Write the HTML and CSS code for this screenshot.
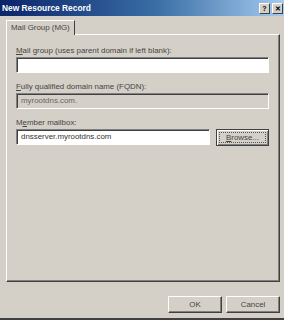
FILE: index.html
```html
<!DOCTYPE html>
<html lang="en">
<head>
    <meta charset="UTF-8">
    <title>New Resource Record</title>
    <link rel="stylesheet" href="styles.css">
</head>
<body>
    <div class="window">
        <div class="titlebar">
            <span class="title">New Resource Record</span>
            <div class="caption-buttons">
                <span class="cap-btn">?</span>
                <span class="cap-btn">&#x2715;</span>
            </div>
        </div>

        <div class="tabs">
            <div class="tab">Mail Group (MG)</div>
        </div>

        <div class="panel">
            <label class="field-label"><u>M</u>ail group (uses parent domain if left blank):</label>
            <div class="textbox"></div>

            <label class="field-label"><u>F</u>ully qualified domain name (FQDN):</label>
            <div class="textbox disabled">myrootdns.com.</div>

            <label class="field-label">M<u>e</u>mber mailbox:</label>
            <div class="row">
                <div class="textbox">dnsserver.myrootdns.com</div>
                <button class="btn browse"><u>B</u>rowse...</button>
            </div>
        </div>

        <div class="footer">
            <button class="btn">OK</button>
            <button class="btn">Cancel</button>
        </div>
    </div>
</body>
</html>
```

FILE: styles.css
```css
body {
    margin: 0;
    font-family: "Liberation Sans", Arial, sans-serif;
    font-size: 7.9px;
    color: #333;
}
.window {
    width: 284px;
    height: 320px;
    background-color: #d4d0c8;
    box-sizing: border-box;
    border-bottom: 2px solid #404040;
    display: flex;
    flex-direction: column;
}
.titlebar {
    height: 16px;
    background: linear-gradient(to right, #0a246a, #3a6ea5 55%, #a6caf0);
    display: flex;
    align-items: center;
    justify-content: space-between;
    padding: 0 1px 0 2px;
}
.title {
    color: white;
    font-weight: bold;
    font-size: 8.4px;
}
.caption-buttons {
    display: flex;
    gap: 2px;
}
.cap-btn {
    width: 9px;
    height: 9px;
    background-color: #d4d0c8;
    border: 1px solid;
    border-color: #fff #404040 #404040 #fff;
    font-size: 7px;
    font-weight: bold;
    line-height: 9px;
    text-align: center;
    color: #000;
}
.tabs {
    display: flex;
    padding: 4px 0 0 6px;
}
.tab {
    height: 14px;
    padding: 0 4px;
    border: 1px solid;
    border-color: #fff #404040 transparent #fff;
    border-bottom: none;
    line-height: 14px;
    color: #444;
    margin-bottom: -1px;
    position: relative;
    background-color: #d4d0c8;
}
.panel {
    margin: 0 4px 0 6px;
    height: 248px;
    box-sizing: border-box;
    border: 1px solid;
    border-color: #fff #404040 #404040 #fff;
    box-shadow: inset -1px -1px 0 #808080;
    padding: 11px 10px 0 9px;
}
.field-label {
    display: block;
    height: 11px;
    line-height: 9px;
    color: #444;
}
.textbox {
    height: 16px;
    box-sizing: border-box;
    background-color: white;
    border: 1px solid;
    border-color: #808080 #fff #fff #808080;
    box-shadow: inset 1px 1px 0 #404040;
    padding: 0 4px;
    line-height: 14px;
    color: #333;
    margin-bottom: 9px;
}
.textbox.disabled {
    background-color: #d4d0c8;
    color: #666;
}
.row {
    display: flex;
    gap: 6px;
}
.row .textbox {
    flex: 1;
}
.btn {
    font-family: inherit;
    font-size: 7.9px;
    color: #444;
    background-color: #d4d0c8;
    border: 1px solid;
    border-color: #fff #404040 #404040 #fff;
    box-shadow: inset -1px -1px 0 #808080;
    height: 17px;
    width: 54px;
    padding: 0;
}
.browse {
    width: 53px;
    border-color: #404040;
    box-shadow: inset 1px 1px 0 #fff, inset -1px -1px 0 #808080;
    outline: 1px dotted #555;
    outline-offset: -4px;
}
.footer {
    display: flex;
    justify-content: flex-end;
    gap: 4px;
    padding: 14px 4px 0 0;
}
```
